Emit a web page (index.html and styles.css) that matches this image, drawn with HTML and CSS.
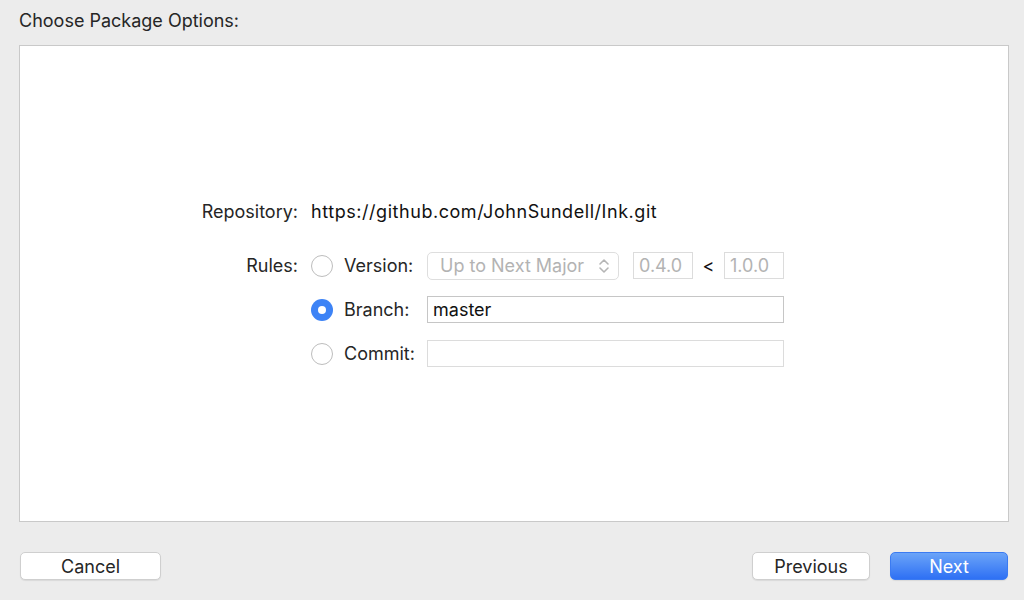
FILE: index.html
```html
<!DOCTYPE html>
<html>
<head>
  <title>Choose Package Options</title>
  <link rel="stylesheet" href="styles.css">
</head>
<body>
  <div class="sheet">
    <h2 class="title">Choose Package Options:</h2>

    <div class="panel">
      <div class="form">
        <div class="label">Repository:</div>
        <div class="value repo">https://github.com/JohnSundell/Ink.git</div>

        <div class="label rules-label">Rules:</div>
        <div class="rules">
          <div class="rule">
            <span class="radio"></span>
            <span class="rule-name">Version:</span>
            <div class="select disabled">
              <span>Up to Next Major</span>
              <svg class="chevrons" width="12" height="18" viewBox="0 0 12 18">
                <path d="M2 7 L6 3 L10 7" fill="none" stroke="#b5b5b5" stroke-width="1.6" stroke-linecap="round" stroke-linejoin="round"/>
                <path d="M2 11 L6 15 L10 11" fill="none" stroke="#b5b5b5" stroke-width="1.6" stroke-linecap="round" stroke-linejoin="round"/>
              </svg>
            </div>
            <div class="field small from disabled">0.4.0</div>
            <span class="lt">&lt;</span>
            <div class="field small disabled">1.0.0</div>
          </div>
          <div class="rule">
            <span class="radio checked"></span>
            <span class="rule-name">Branch:</span>
            <div class="field wide">master</div>
          </div>
          <div class="rule">
            <span class="radio"></span>
            <span class="rule-name">Commit:</span>
            <div class="field wide disabled"></div>
          </div>
        </div>
      </div>
    </div>

    <div class="footer">
      <button class="btn">Cancel</button>
      <div class="spacer"></div>
      <button class="btn prev">Previous</button>
      <button class="btn primary">Next</button>
    </div>
  </div>
</body>
</html>
```

FILE: styles.css
```css
html, body {
  margin: 0;
  padding: 0;
}
body {
  width: 1024px;
  height: 600px;
  background-color: #ececec;
  font-family: Inter, "Liberation Sans", Arial, sans-serif;
  font-size: 18px;
  color: #262626;
  overflow: hidden;
}
.sheet {
  display: flex;
  flex-direction: column;
  height: 600px;
}
.title {
  margin: 0;
  padding: 10px 0 0 19px;
  height: 45px;
  box-sizing: border-box;
  font-size: 18px;
  font-weight: normal;
  line-height: 22px;
}
.panel {
  margin-left: 19px;
  width: 990px;
  height: 477px;
  box-sizing: border-box;
  background-color: white;
  border: 1px solid #c9c9c9;
  display: flex;
  align-items: center;
}
.form {
  display: grid;
  grid-template-columns: 120px auto;
  column-gap: 13px;
  row-gap: 26px;
  margin-left: 158px;
  margin-top: -2px;
}
.label {
  text-align: right;
  line-height: 28px;
}
.value {
  line-height: 28px;
  color: #111;
}
.repo {
  letter-spacing: 0.55px;
}
.rules-label {
  align-self: start;
}
.rules {
  display: flex;
  flex-direction: column;
  gap: 16px;
}
.rule {
  display: flex;
  align-items: center;
  height: 28px;
}
.radio {
  width: 20px;
  height: 20px;
  border: 1px solid #bdbdbd;
  border-radius: 50%;
  background-color: white;
  box-sizing: content-box;
  flex-shrink: 0;
}
.radio.checked {
  width: 22px;
  height: 22px;
  border: none;
  background-color: #3d83f6;
  display: flex;
  align-items: center;
  justify-content: center;
}
.radio.checked::after {
  content: "";
  width: 8px;
  height: 8px;
  border-radius: 50%;
  background-color: white;
}
.rule-name {
  width: 83px;
  margin-left: 11px;
}
.select {
  width: 192px;
  height: 28px;
  box-sizing: border-box;
  border: 1px solid #dedede;
  border-radius: 5px;
  padding: 0 8px 0 12px;
  display: flex;
  align-items: center;
  justify-content: space-between;
  color: #b3b3b3;
}
.field {
  height: 27px;
  box-sizing: border-box;
  border: 1px solid #c6c6c6;
  padding: 0 5px;
  line-height: 25px;
  color: #111;
}
.field.disabled {
  border-color: #dcdcdc;
  color: #b3b3b3;
}
.field.small {
  width: 60px;
}
.field.from {
  margin-left: 14px;
}
.field.wide {
  width: 357px;
}
.lt {
  width: 31px;
  text-align: center;
  color: #111;
}
.footer {
  display: flex;
  align-items: center;
  padding: 30px 16px 0 20px;
}
.spacer {
  flex: 1;
}
.btn {
  width: 141px;
  height: 28px;
  font-family: inherit;
  font-size: 18px;
  color: #262626;
  background-color: white;
  border: 1px solid #cfcfcf;
  border-radius: 5px;
  box-shadow: 0 1px 1px rgba(0, 0, 0, 0.08);
  padding: 0;
}
.btn.prev {
  width: 118px;
}
.btn.primary {
  width: 118px;
  margin-left: 20px;
  color: white;
  border: 1px solid #3b7bf2;
  background: linear-gradient(#6ba4f8, #2e70f4);
}
```
